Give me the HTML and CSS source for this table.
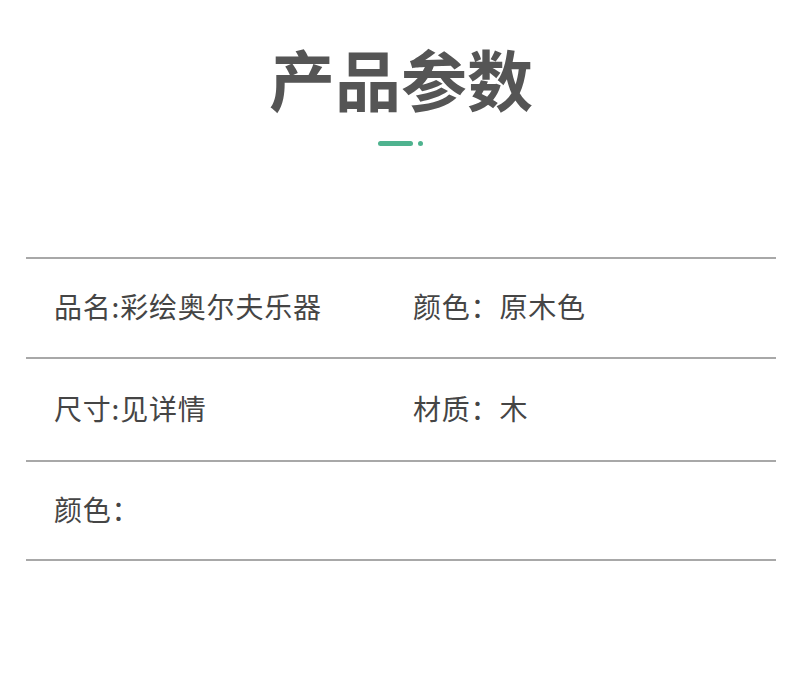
FILE: index.html
```html
<!DOCTYPE html>
<html lang="zh-CN">
<head>
<meta charset="utf-8">
<link rel="stylesheet" href="styles.css">
</head>
<body>
<div class="page">
  <h1 class="title">产品参数</h1>
  <div class="deco"><span class="bar"></span><span class="dot"></span></div>
  <div class="table">
    <div class="row">
      <div class="cell">品名:彩绘奥尔夫乐器</div>
      <div class="cell">颜色：原木色</div>
    </div>
    <div class="row">
      <div class="cell">尺寸:见详情</div>
      <div class="cell">材质：木</div>
    </div>
    <div class="row">
      <div class="cell">颜色：</div>
      <div class="cell"></div>
    </div>
  </div>
</div>
</body>
</html>
```

FILE: styles.css
```css
html, body {
  margin: 0;
  padding: 0;
  background: #fff;
}
body {
  font-family: "Noto Sans CJK SC", "Noto Sans", sans-serif;
  color: #454545;
}
.page {
  width: 790px;
  height: 681px;
  padding-top: 31px;
  box-sizing: border-box;
}
.title {
  margin: 0;
  padding-left: 12px;
  text-align: center;
  font-size: 66px;
  line-height: 92px;
  font-weight: 700;
  color: #555;
}
.deco {
  display: flex;
  justify-content: center;
  align-items: center;
  gap: 5px;
  margin-top: 18px;
  padding-left: 10px;
}
.bar {
  width: 35px;
  height: 5px;
  border-radius: 3px;
  background: #4fb38f;
}
.dot {
  width: 5px;
  height: 5px;
  border-radius: 50%;
  background: #4fb38f;
}
.table {
  margin: 111px 14px 0 26px;
  border-top: 2px solid #a8a8a8;
}
.row {
  display: grid;
  grid-template-columns: 359px 1fr;
  height: 98px;
  box-sizing: content-box;
  align-items: center;
  border-bottom: 2px solid #a8a8a8;
  padding-left: 28px;
}
.row > .cell {
  padding-bottom: 4px;
}
.row:nth-child(2) {
  height: 101px;
}
.row:nth-child(3) {
  height: 97px;
}
.cell {
  font-size: 28px;
  line-height: 1;
  color: #454545;
  letter-spacing: 0.8px;
}
```
